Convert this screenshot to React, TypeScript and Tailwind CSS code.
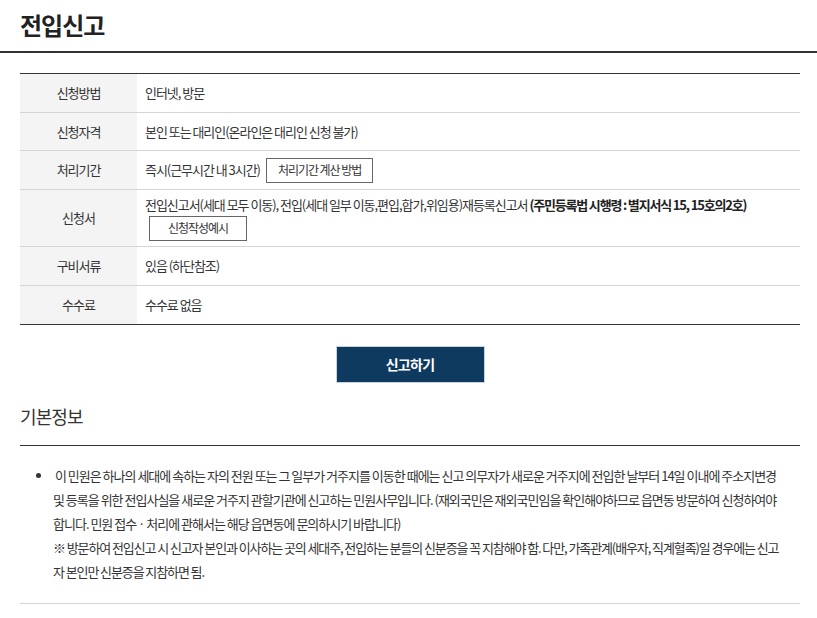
import React from 'react';

const font = { fontFamily: '"Noto Sans CJK KR", "Noto Sans", sans-serif' };

function Row({ label, children, h }: { label: string; children: React.ReactNode; h: string }) {
	return (
		<div className={`flex border-t border-[#d5d5d5] first:border-t-0 ${h}`}>
			<div className="w-[117px] shrink-0 bg-[#f4f4f4] flex items-center justify-center text-[13px] text-[#333] tracking-[-0.08em]">
				{label}
			</div>
			<div className="flex-1 flex items-center pl-[8px] text-[13px] text-[#333] tracking-[-0.08em]">{children}</div>
		</div>
	);
}

function SmallBtn({ children }: { children: React.ReactNode }) {
	return (
		<span className="inline-flex items-center justify-center h-[25px] px-[11px] border border-[#666] text-[12px] text-[#333] bg-white">
			{children}
		</span>
	);
}

export default function App() {
	return (
		<div className="w-[817px] h-[618px] bg-white overflow-hidden" style={font}>
			{/* header */}
			<div className="pl-[20px] pt-[7px] pb-[8px] border-b-[2px] border-[#333]">
				<h1 className="text-[24px] font-bold text-[#222] leading-[36px] tracking-[-0.04em]">전입신고</h1>
			</div>

			<div className="px-[20px] pr-[17px]">
				{/* table */}
				<div className="mt-[20px] border-t border-b border-[#333]">
					<Row label="신청방법" h="min-h-[38px]">인터넷, 방문</Row>
					<Row label="신청자격" h="min-h-[38px]">본인 또는 대리인(온라인은 대리인 신청 불가)</Row>
					<Row label="처리기간" h="min-h-[39px]">
						<span className="mr-[6px]">즉시(근무시간 내 3시간)</span>
						<SmallBtn>처리기간 계산 방법</SmallBtn>
					</Row>
					<Row label="신청서" h="min-h-[57px]">
						<div className="flex flex-col py-[5px]">
							<div className="leading-[18px]">
								전입신고서(세대 모두 이동), 전입(세대 일부 이동,편입,합가,위임용)재등록신고서{' '}
								<b className="font-bold text-[#222] tracking-[-0.09em]">(주민등록법 시행령 : 별지서식 15, 15호의2호)</b>
							</div>
							<div className="pl-[4px] mt-[2px]">
								<span className="inline-flex items-center justify-center h-[25px] w-[98px] border border-[#666] text-[12px] text-[#333]">
									신청작성예시
								</span>
							</div>
						</div>
					</Row>
					<Row label="구비서류" h="min-h-[39px]">있음 (하단참조)</Row>
					<Row label="수수료" h="min-h-[39px]">수수료 없음</Row>
				</div>

				{/* button */}
				<div className="flex justify-center mt-[21px]">
					<button className="w-[149px] h-[37px] bg-[#0f3a60] border border-[#c9d3dd] text-white text-[14px] font-bold tracking-[-0.05em]">
						신고하기
					</button>
				</div>

				{/* info */}
				<h2 className="mt-[20px] text-[18px] text-[#333] leading-[26px] tracking-[-0.05em] pb-[16px] border-b border-[#333]">
					기본정보
				</h2>
				<div className="pt-[18px] pb-[19px] border-b border-[#d5d5d5]">
					<ul className="list-disc pl-[33px] text-[13px] text-[#333] leading-[24px] tracking-[-1px] marker:text-[#333]">
						<li className="pr-[15px]">
							{'\u00a0'}
							이 민원은 하나의 세대에 속하는 자의 전원 또는 그 일부가 거주지를 이동한 때에는 신고 의무자가 새로운 거주지에 전입한 날부터 14일 이내에 주소지변경 및 등록을 위한 전입사실을 새로운 거주지 관할기관에 신고하는 민원사무입니다. (재외국민은 재외국민임을 확인해야하므로 읍면동 방문하여 신청하여야 합니다. 민원 접수 · 처리에 관해서는 해당 읍면동에 문의하시기 바랍니다)
							<br />
							<span className="tracking-[-1.1px]">
								※ 방문하여 전입신고 시 신고자 본인과 이사하는 곳의 세대주, 전입하는 분들의 신분증을 꼭 지참해야 함. 다만, 가족관계(배우자, 직계혈족)일 경우에는 신고자 본인만 신분증을 지참하면 됨.
							</span>
						</li>
					</ul>
				</div>
			</div>
		</div>
	);
}
